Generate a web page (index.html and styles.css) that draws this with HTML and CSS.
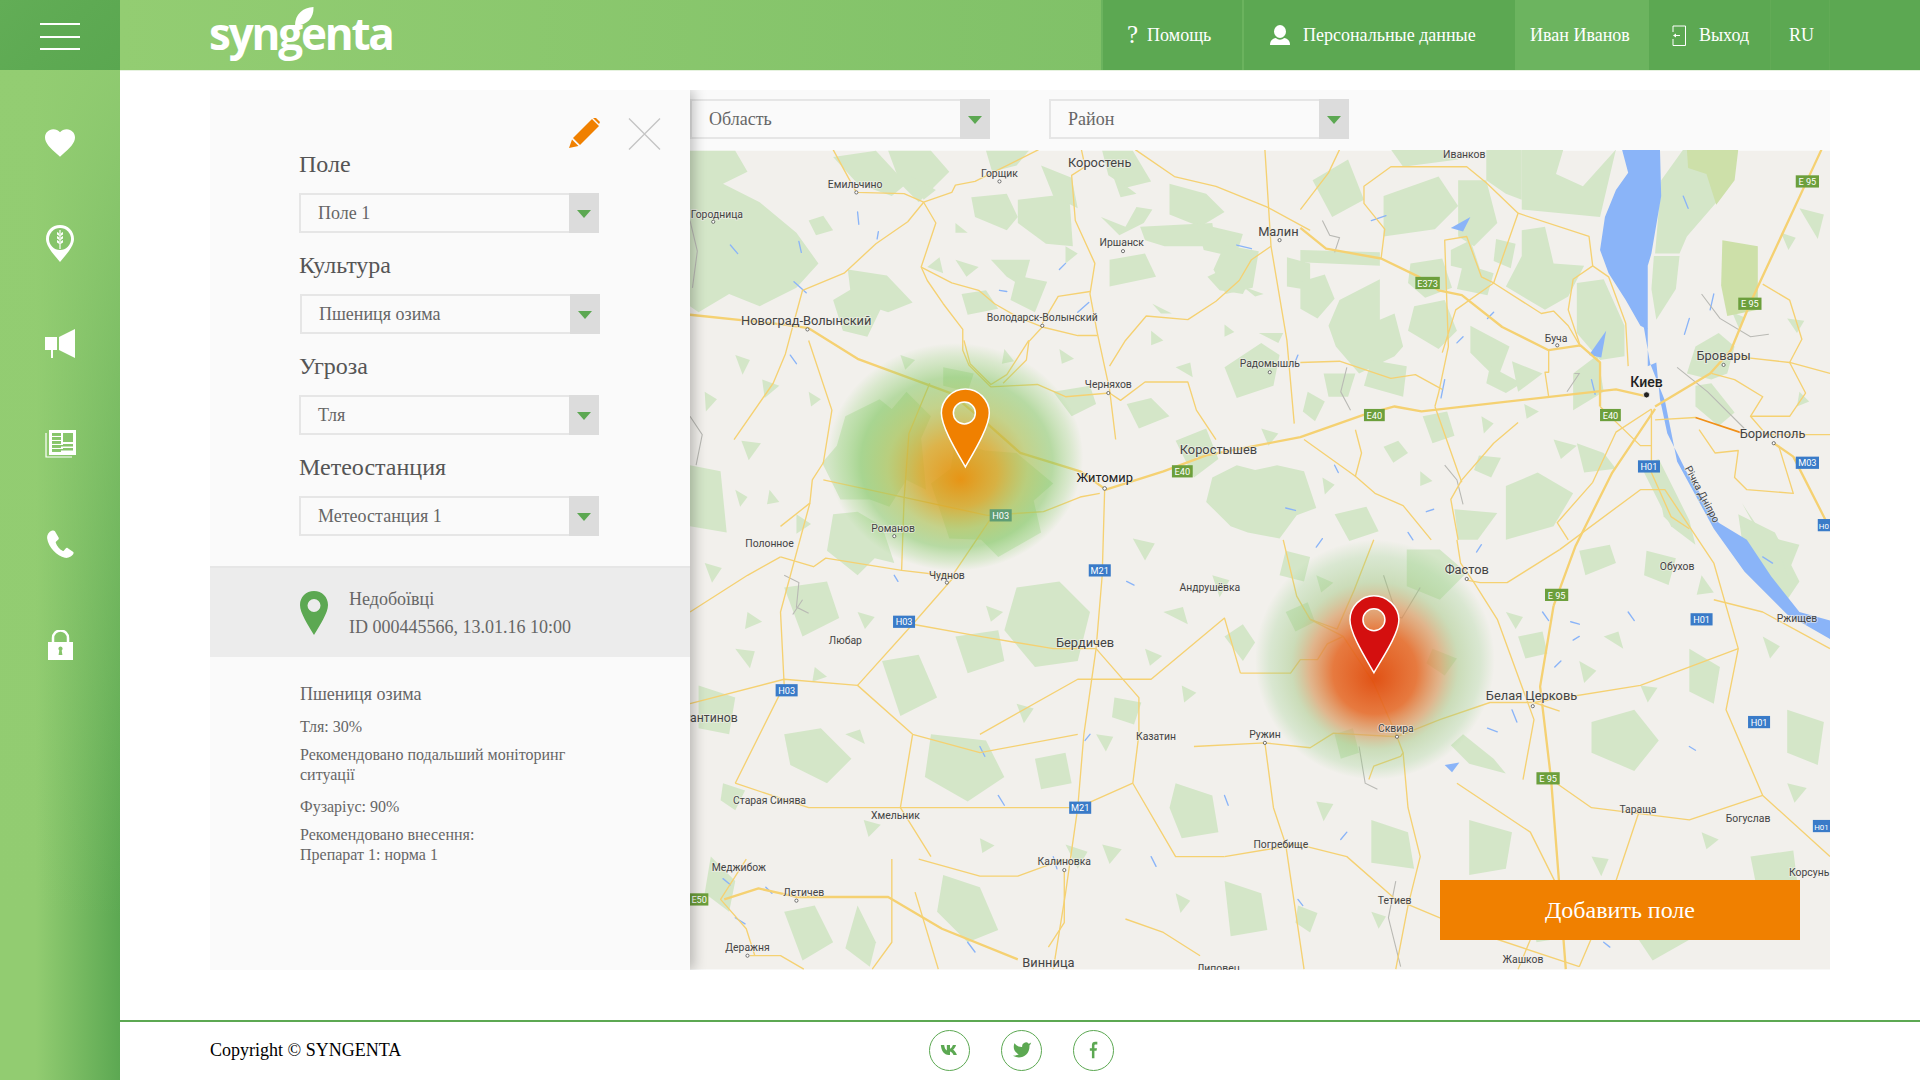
FILE: index.html
```html
<!DOCTYPE html>
<html lang="ru">
<head>
    <meta charset="UTF-8">
    <meta name="viewport" content="width=device-width, initial-scale=1.0">
    <title>Syngenta</title>
    <link rel="stylesheet" href="styles.css">
</head>
<body>
<div class="app">
    <aside class="sidebar">
        <div class="burger"><span></span><span></span><span></span></div>
        <nav class="side-nav">
            <a class="side-item"><svg width="30" height="28" viewBox="2 3 20 18.4"><path fill="#fff" d="M12 21.35l-1.45-1.32C5.4 15.36 2 12.28 2 8.5 2 5.42 4.42 3 7.5 3c1.74 0 3.41.81 4.5 2.09C13.09 3.81 14.76 3 16.5 3 19.58 3 22 5.42 22 8.5c0 3.78-3.4 6.86-8.55 11.54L12 21.35z"/></svg></a>
            <a class="side-item"><svg width="28" height="37" viewBox="0 0 28 37"><path fill="#fff" d="M14 0C6 0 0 6 0 14c0 7 8 16 14 23 6-7 14-16 14-23C28 6 22 0 14 0z"/><circle cx="14" cy="14" r="11" fill="#86c46a"/><path fill="#fff" d="M13.4 5h1.2v19h-1.2zM12.8 8l.6 3-2.4-1.6V7zM15.200 8l-.6 3 2.400-1.600V7zM12.800 12l.6 3-2.400-1.600v-2.400zM15.200 12l-.6 3 2.400-1.600v-2.400zM12.800 16l.6 3-2.400-1.600V15zM15.200 16l-.6 3 2.400-1.600V15z"/></svg></a>
            <a class="side-item"><svg width="30" height="29" viewBox="0 0 30 29"><path fill="#fff" d="M0 8h12v13H8v8H6v-8H0zM14 8l16-8v29l-16-8z"/></svg></a>
            <a class="side-item"><svg width="31" height="28" viewBox="0 0 31 28"><path fill="none" stroke="#fff" stroke-width="1.200" d="M1 3v24h26"/><path fill="#fff" d="M4 0h27v25H4zM7 3v3h9V3zm11 0v9h10V3zM7 8v2h9V8zm0 4v2h9v-2zm11 2v2h10v-2zM7 16v2h9v-2zm11 2v2h10v-2zM7 20v2h9v-2z"/><path fill="#86c46a" d="M7 3h9v2H7zM7 7h9v1.500H7zM7 11h9v1.500H7zM7 15h21v1.500H7zM7 19h21v1.500H7z"/></svg></a>
            <a class="side-item"><svg width="29" height="29" viewBox="0 0 24 24"><path fill="#fff" d="M4.600.7C2.600 1.600.6 3.900 1 7.200c.9 6.800 8.200 14.400 14.600 15.800 2.700.6 6.500-1.300 7.200-3.700.2-.6-.1-1-.5-1.300l-4.200-2.900c-.7-.5-1.300-.4-1.800.2l-1.600 1.800c-.3.3-.6.3-1 .1-2.400-1.300-4.700-4-5.600-6.700-.1-.4 0-.7.3-.9L10 8.100c.7-.5.7-1.100.4-1.800L7.400 1.100C6.800.2 5.800.1 4.600.7z"/></svg></a>
            <a class="side-item"><svg width="25" height="30" viewBox="0 0 25 30"><path fill="none" stroke="#fff" stroke-width="2.500" d="M5 13V8a7.500 7.500 0 0 1 15 0v5"/><path fill="#fff" d="M0 12h25v18H0z"/><path fill="#86c46a" d="M12.500 16.500a2.200 2.200 0 0 1 1.200 4l.7 4.500h-3.800l.7-4.500a2.200 2.200 0 0 1 1.200-4z"/></svg></a>
        </nav>
    </aside>
    <div class="content">
        <header class="topbar">
            <div class="logo">
                <svg class="logo-leaf" width="19" height="19" viewBox="0 0 19 19"><path fill="#fff" d="M0 18.500C0 7 8 .5 18.500 0 19 11 12 18.500 0 18.500z"/></svg>
                <span>syngenta</span>
            </div>
            <nav class="top-nav">
                <a class="top-item item-help"><span class="help-mark">?</span>Помощь</a>
                <a class="top-item item-person"><svg width="20" height="20" viewBox="0 0 20 20"><ellipse cx="10" cy="6.500" rx="6" ry="6.500" fill="#fff"/><path fill="#fff" d="M0 20c0-4 2-6.500 6-7 1 1.200 2.500 1.700 4 1.700s3-.5 4-1.700c4 .5 6 3 6 7z"/></svg>Персональные данные</a>
                <a class="top-item item-user">Иван Иванов</a>
                <a class="top-item item-exit"><svg width="14" height="21" viewBox="0 0 14 21"><path fill="none" stroke="#fff" d="M1 7V1h12.500v19.500H1V14"/><path fill="#fff" d="M1 10.500l3-2v1.500h4v1H4V12.500z"/></svg>Выход</a>
                <a class="top-item item-lang">RU</a>
            </nav>
        </header>

        <main class="board">
            <section class="panel">
                <div class="panel-tools">
                    <svg width="31" height="30" viewBox="0 0 31 30"><path fill="#f08000" d="M24 0l2-1 5 5-1 2zM23 1l7 7L11 27l-7-7zM3 21.500L9.500 28 0 30z"/></svg>
                    <svg width="33" height="32" viewBox="0 0 33 32"><path fill="none" stroke="#c4c4c4" stroke-width="1.300" d="M1 .5l31 31M32 .5l-31 31"/></svg>
                </div>
                <div class="fields">
                    <div class="field">
                        <label>Поле</label>
                        <div class="select"><span>Поле 1</span><i></i></div>
                    </div>
                    <div class="field">
                        <label>Культура</label>
                        <div class="select select-shift"><span>Пшениця озима</span><i></i></div>
                    </div>
                    <div class="field">
                        <label>Угроза</label>
                        <div class="select"><span>Тля</span><i></i></div>
                    </div>
                    <div class="field">
                        <label>Метеостанция</label>
                        <div class="select"><span>Метеостанция 1</span><i></i></div>
                    </div>
                </div>
                <div class="station">
                    <svg width="28" height="44" viewBox="0 0 28 44"><path fill="#5ca852" fill-rule="evenodd" d="M14 0C6 0 0 6 0 14c0 8 8 20 14 30 6-10 14-22 14-30C28 6 22 0 14 0zm0 8a6.500 6.500 0 1 1 0 13 6.500 6.500 0 0 1 0-13z"/></svg>
                    <div class="station-text">
                        <div>Недобоївці</div>
                        <div>ID 000445566, 13.01.16 10:00</div>
                    </div>
                </div>
                <div class="details">
                    <h3>Пшениця озима</h3>
                    <p class="d-pest">Тля: 30%</p>
                    <p class="d-rec">Рекомендовано подальший моніторинг ситуації</p>
                    <p class="d-pest2">Фузаріус: 90%</p>
                    <p class="d-rec2">Рекомендовано внесення:<br>Препарат 1: норма 1</p>
                </div>
            </section>

            <section class="map-side">
                <div class="map-filters">
                    <div class="select"><span>Область</span><i></i></div>
                    <div class="select"><span>Район</span><i></i></div>
                </div>
                <div class="map">
                    <svg class="map-svg" width="1140" height="820" viewBox="563 123 932 669">
                        <defs>
                            <radialGradient id="heat-orange" fx=".52" fy=".6">
                                <stop offset="0" stop-color="#e8900c" stop-opacity=".95"/>
                                <stop offset=".3" stop-color="#d8a422" stop-opacity=".8"/>
                                <stop offset=".55" stop-color="#a8c050" stop-opacity=".62"/>
                                <stop offset=".75" stop-color="#7cc45a" stop-opacity=".5"/>
                                <stop offset=".9" stop-color="#8fd070" stop-opacity=".25"/>
                                <stop offset="1" stop-color="#8fd070" stop-opacity="0"/>
                            </radialGradient>
                            <radialGradient id="heat-red" fx=".5" fy=".58">
                                <stop offset="0" stop-color="#e04a0a" stop-opacity=".95"/>
                                <stop offset=".35" stop-color="#e56a28" stop-opacity=".88"/>
                                <stop offset=".55" stop-color="#d89a60" stop-opacity=".68"/>
                                <stop offset=".7" stop-color="#9cc47a" stop-opacity=".45"/>
                                <stop offset=".88" stop-color="#8fcc80" stop-opacity=".25"/>
                                <stop offset="1" stop-color="#8fcc80" stop-opacity="0"/>
                            </radialGradient>
                        </defs>
                        <rect x="563" y="123" width="932" height="669" fill="#f2f0ec"/>

                        <g class="forest">
                            <path d="M563 123h37l10 17-20 10 30 15 30 25 18 25-18 20-30 15-25-10-25 15-7-5z"/>
                            <path d="M680 128l35-5 25 27-12 10-28-10z"/>
                            <path d="M725 123h35l15 17-25 25-15-15z"/>
                            <path d="M793 161l29-3 9 19-9 11-26-11z"/>
                            <path d="M831 163l42-5 3 43-22-2-23-17z"/>
                            <path d="M850 135l25 10 5 25-20-10z"/>
                            <path d="M805 123h35l-10 12-20 5z"/>
                            <path d="M900 123h25l15 25-20 5-15-10z"/>
                            <path d="M955 150l30 8 15 15-20 12-25-10z"/>
                            <path d="M931 185l59-3 3 19-42 0-16-5z"/>
                            <path d="M977 182l38 9-6 19-26-6z"/>
                            <path d="M986 226l23-11 13 11-7 14-19-3z"/>
                            <path d="M906 212l29-5 9 19-38 8z"/>
                            <path d="M899 177l20 8 9-16 13 2-7 11-20 10z"/>
                            <path d="M909 144l19 14-13 3z"/>
                            <path d="M780 212l19 6-10 8z"/>
                            <path d="M809 212h32l-6 22-13-8z"/>
                            <path d="M767 210l3 13-13-5z"/>
                            <path d="M744 144l20 11-10 8z"/>
                            <path d="M780 182l10 8h-10z"/>
                            <path d="M870 201l10 6-10 8z"/>
                            <path d="M941 248l16 8-9 0z"/>
                            <path d="M1028 272h20l-4 8z"/>
                            <path d="M1015 234l17 6-7 2z"/>
                            <path d="M1051 210l19 5v22l-19-3z"/>
                            <path d="M1000 200l28 5-5 30-22 5-10-20z"/>
                            <path d="M660 180l12-4 8 12-14 4z"/>
                            <path d="M680 245l25-15 15 20-12 25-20-5z"/>
                            <path d="M692 220l32 5 21 22-20 8-30-10z"/>
                            <path d="M785 240l20-3 10 15-25 5z"/>
                            <path d="M830 225l25 5-10 25-20-10z"/>
                            <path d="M770 300l25 5-5 15-20-5z"/>
                            <path d="M690 340l28-14 10 8 12-14 20 20-8 18 4 42-16-8-14 22-16-6-24 0-15-30 12-14z"/>
                            <path d="M680 420l20-2 20 12 10 30-16-4-14 14-25-20z"/>
                            <path d="M780 360l24 8 26 2 30 25-16 14 6 26-35 20-14-14-26-1-15-45 16-12z"/>
                            <path d="M563 380l25 5 5 50-30-5z"/>
                            <path d="M860 320l30-5 5 15-20 10z"/>
                            <path d="M920 330l20-5 15 15-25 10z"/>
                            <path d="M960 360l25-10 10 25-20 15z"/>
                            <path d="M990 390l20-10 15 4 18-4 22 5 10 30-16 6-14 19-26-5-14-5-20-20z"/>
                            <path d="M1000 300l30-20 15 10-5 25-30 10z"/>
                            <path d="M1094 245l33-17v33l12-5 7 27-7 8-29 14-19-22-6-17z"/>
                            <path d="M1072 147l29-17 13 33-26 14z"/>
                            <path d="M1130 160l45-16 16 24-19 19-42 6z"/>
                            <path d="M1136 122h42l13 8-45 6z"/>
                            <path d="M1062 204l65 2v11l-65-3z"/>
                            <path d="M1185 204l16-8 9 27-25-6z"/>
                            <path d="M1191 147h23l9 35-19 19-13-8z"/>
                            <path d="M1214 122h29v41l-13-5-16-11z"/>
                            <path d="M1243 122h34l-6 20 22 10 27-30-13 55-64-6z"/>
                            <path d="M1243 188l19-3 7 30 25 2-13 25-19 11-32-19 13-25z"/>
                            <path d="M1288 231l22-3 17 38v25l-20 3-19-22z"/>
                            <path d="M1351 209h21l-3 27-16 25-4-25z"/>
                            <path d="M1375 122h25l4 41-26 30-6 14h-20l5-60z"/>
                            <path d="M1385 283l19-11 13 11-6 22-13 5-20-5z"/>
                            <path d="M1385 315l13-2 19 24-13 11-19-16z"/>
                            <path d="M1201 266l32 17-10 27-22-22z"/>
                            <path d="M1120 294l29 5-3 25-32-9z"/>
                            <path d="M1081 305h26l-6 19h-16z"/>
                            <path d="M1217 299l26 14-13 8-16-8z"/>
                            <path d="M1230 397l26-11 29 17-16 27-39 11z"/>
                            <path d="M1188 416l35 3-16 22h-16z"/>
                            <path d="M1288 362l22 8 10 13-26 3z"/>
                            <path d="M1352 386l20 33v16l-13-13z"/>
                            <path d="M1269 359l19 5-13 11z"/>
                            <path d="M1423 411l18 27 13 3-20-10z"/>
                            <path d="M1155 250l25-5 10 25-15 15-25-15z"/>
                            <path d="M1195 215l25 8-5 18-25-5z"/>
                            <path d="M1285 305l20-15 5 30-25 15z"/>
                            <path d="M1235 295l25 10-20 15z"/>
                            <path d="M1130 365l12-5 8 10-12 8z"/>
                            <path d="M1340 380l15-5 25 50 5 20-20-15z"/>
                            <path d="M1420 420l30 15 20 40-10 15-35-35z"/>
                            <path d="M1149 449l27 0 22 19-22 22-27-11z"/>
                            <path d="M1290 450l25-5 5 15-25 10z"/>
                            <path d="M1170 530l20 8-10 14-15-10z"/>
                            <path d="M1195 600l25 20 10 12-30-8-15-15z"/>
                            <path d="M1050 450l20 5-5 20-20-5z"/>
                            <path d="M1000 520l15-10 10 15-10 15z"/>
                            <path d="M830 480l35-5 25 25-10 40-35 5-25-30z"/>
                            <path d="M780 520l35-5 5 25-30 10z"/>
                            <path d="M720 540l30-5 15 35-30 15z"/>
                            <path d="M640 480l35-5 10 30-30 15z"/>
                            <path d="M570 560l30 10-5 30-25-5z"/>
                            <path d="M640 600l30-5 25 25-20 20-30-15z"/>
                            <path d="M760 600l45 5 15 30-30 20-35-20z"/>
                            <path d="M845 620l25-5 5 25-25 5z"/>
                            <path d="M960 640l30 10 5 30-30 5-10-25z"/>
                            <path d="M1000 720l30 10 5 30-30 5z"/>
                            <path d="M1120 670l30 10 5 30-35-5z"/>
                            <path d="M1200 670l35 10-5 30-30 5z"/>
                            <path d="M1300 590l35-10 20 25-20 25-35-15z"/>
                            <path d="M1380 530l25 15-5 30-20-10z"/>
                            <path d="M1340 720l35 5 10 40-35 20-20-30z"/>
                            <path d="M1430 700l35-5 5 40-30 15z"/>
                            <path d="M1250 740l30-5 5 30-30 5z"/>
                            <path d="M580 700l20 20-5 25-20-15z"/>
                            <path d="M640 745l25-5 15 30-25 15z"/>
                            <path d="M700 740l15 30-5 20-20-15z"/>
                            <path d="M770 715l30 10 15 35-25 10-25-25z"/>
                            <path d="M1090 600l15-5 5 20-15 5z"/>
                            <path d="M1460 580l30 10-5 35-25-10z"/>
                            <path d="M1470 170l20 5-5 20z"/>
                            <path d="M1450 440l20 5-10 25z"/>
                            <path d="M600 290l12 4-6 12z"/><path d="M622 310l14 5-12 10z"/><path d="M575 320l10 6-9 10z"/>
                            <path d="M605 360l16 2-10 14z"/><path d="M575 460l14 4-8 12z"/><path d="M610 500l12 8-14 6z"/>
                            <path d="M600 530l16 2-4 14z"/><path d="M665 545l10 8-12 4z"/><path d="M700 500l14 4-8 10z"/>
                            <path d="M805 495l14 5-10 8z"/><path d="M925 440l18 4-8 14z"/><path d="M950 500l16-4 4 14z"/>
                            <path d="M935 530l14 6-10 8z"/><path d="M990 470l14 4-8 14z"/><path d="M1075 470l14 6-10 8z"/>
                            <path d="M965 560l12 6-10 8z"/><path d="M895 600l14 2-6 12z"/><path d="M830 575l14 4-8 12z"/>
                            <path d="M690 600l12-4 4 12z"/><path d="M705 670l14 4-10 10z"/><path d="M800 685l12 6-10 6z"/>
                            <path d="M900 690l16 4-10 12z"/><path d="M960 730l12 6-8 10z"/><path d="M1075 655l14 2-8 14z"/>
                            <path d="M1180 745l14 6-10 8z"/><path d="M1120 745l12 4-6 10z"/><path d="M1300 700l14 2-6 14z"/>
                            <path d="M1390 680l14 6-10 8z"/><path d="M1460 640l16 4-10 12z"/><path d="M1440 520l14 8-8 10z"/>
                            <path d="M1340 560l14 2-8 12z"/><path d="M1310 520l12-4 4 14z"/><path d="M1230 500l14 4-6 10z"/>
                            <path d="M1415 255l10 4-4 10z"/><path d="M1460 260l14 2-6 10z"/><path d="M1455 190l12 4-6 10z"/>
                            <path d="M1470 320l8 8-10 4z"/><path d="M1210 340l10 6-8 8z"/><path d="M1245 330l12 6-10 6z"/>
                            <path d="M1160 385l10 8-10 4z"/><path d="M1080 390l10 6-8 8z"/><path d="M1030 350l14 4-8 10z"/>
                            <path d="M940 270l10 8-10 4z"/><path d="M960 300l12-4 2 12z"/><path d="M1000 265l8 6-8 4z"/>
                            <path d="M865 285l12 8-10 4z"/><path d="M820 285l8 10-10 2z"/><path d="M735 290l12 4-8 8z"/>
                            <path d="M660 320l10 6-8 6z"/><path d="M600 400l10 6-6 8z"/><path d="M628 400l8 10-10 2z"/>
                            <path d="M1062 230l20-6 8 20-14 16-14-8z"/><path d="M1152 215l26-4 8 24-22 8-14-12z"/>
                            <path d="M1222 195l16 4-4 20-14-6z"/><path d="M1068 320l14 8-8 16-10-8z"/><path d="M1162 340l20-4 6 20-18 6z"/>
                            <path d="M1208 372l18 2-8 16-14-6z"/><path d="M1090 420l26-6 10 20-24 8z"/><path d="M1050 500l18-8 6 16-16 8z"/>
                            <path d="M1240 520l20-4 4 18-18 4z"/><path d="M1345 450l24 6-6 22-20-8z"/><path d="M1390 470l10 14-14 2z"/>
                            <path d="M1290 540l14 8-10 10z"/><path d="M910 570l22 4-6 18-18-6z"/><path d="M870 690l18 6-8 14z"/>
                            <path d="M650 420l12 8-12 8z"/><path d="M590 640l18 6-8 16-12-8z"/><path d="M1060 740l16 6-6 16-12-8z"/>
                        </g>
                        <g class="forest-light">
                            <path d="M1378 122h42l-3 25-15 20-8-25-15-5z"/>
                            <path d="M1407 196l29 5v52l-25 5-5-25z"/>
                        </g>

                        <g class="water">
                            <path d="M1325 122h31l1 38-8 47-3 10v52l-6-3-12-21-14-22-7-19 4-27 9-22 10-14z"/>
                            <path d="M1346 269v30l7-3 3 30 6 28 16 32 26 41 23 14 20 30 23 29 25 7v15l-35-20-35-35-25-35-30-55-10-50-12-30-7-40z"/>
                            <path d="M1312 270l-14 20 10 2z"/>
                            <path d="M1185 186l16-9-6 12z"/>
                            <path d="M1180 625l12-2-6 8z"/>
                        </g>
                        <g class="brook">
                            <path d="M596 200l6 7M700 173l1 10M652 197l2 9M716 195l1-6M648 230l10 9M816 237l6 1M870 215l-5 5M880 255l9-8M645 290l5 7M1010 200l12 3M1120 180l12-4M1060 290l-4 10M1180 310l-3 15M1195 275l-5 5M1220 255l-5 5M1300 310l3 12M1375 160l4 10M1400 240l-3 13M1380 260l-4 13M1440 455l8 5M1090 380l3 6M1150 435l4 6M1210 445l-4 6M1165 418l6-2M1260 500l5 7M1283 508l7 2M1215 595l8 3M1275 540l-5 5M1290 520l-5 3M1330 500l5 7M1235 580l4 10M1080 440l-5 7M1050 415l8 2M920 475l6 3M600 750l8 5M590 718l6 5M625 725l5 5M815 650l5 8M860 700l3 10M790 770l6 8M940 700l4 8M1000 650l3 8M1100 680l-5 6M800 610l4 8M730 470l3 5M1060 735l4 5M1380 610l5 3M1310 770l5 4M890 600l-4 5"/>
                        </g>
                        <g class="border-line">
                            <path d="M563 180l6 25-4 30M563 340l10 15-5 25M640 470l12 6-2 20 10 5M655 490l-8 12M1080 180l6 12 8 2-4 12M1100 300l-5 20 8 15M1180 380l10 12 5 20M1280 320l10-15h-4M1390 240l15 20 25 15 15-2M1370 300l25 20 30 30M1130 470l10 30-5 30M1160 480l-15 25-15-5M1110 610l5 30 10 5M1140 720l-6 30 10 40"/>
                        </g>
                        <g class="road">
                            <path d="M680 122l19 35 39 1 16 7 23-8 3-6 16-3 52-26"/>
                            <path d="M754 165l10 17-12 36 5 11 13 19 16 21v17l5 12 18 18"/>
                            <path d="M754 165l-13 16-26 18-26 24-34 14-6 22-8 30-10 24-32 46"/>
                            <path d="M752 218l25 13 22 6 13 11 19 11 20 8 29 7 16 0"/>
                            <path d="M851 267l-11 12-2 15-19 19"/>
                            <path d="M809 316l38-2 23 10 36-3 9 6 20-15h35l7 23 16 24"/>
                            <path d="M883 122l3 14-11 7 3 37 16 35-4 25 6 32 10 46 5 41"/>
                            <path d="M1033 122l3 47 2 32 13 77 6 68"/>
                            <path d="M1038 201l-16 11-10 17-19 17-23 15-34-3-17 20-13 21"/>
                            <path d="M890 238l-26 4-13 22"/>
                            <path d="M927 122l32 22 34 8 42 17 35 19"/>
                            <path d="M672 392l134 29 46-3 30-12 16-3"/>
                            <path d="M759 313l-17 41-4 54-2 58"/>
                            <path d="M808 425l-29 43"/>
                            <path d="M637 455l27 8 10-7 62 10 43 5"/>
                            <path d="M660 278l19 57-7 43-9 14-2 19-24 19"/>
                            <path d="M787 278l5 19 17 17 13-8 18-28"/>
                            <path d="M1013 550h41l8-11h14l8-13 13-6-27-14-11-19-11-46"/>
                            <path d="M1070 506l22 8 14-32 16-41"/>
                            <path d="M1097 520l25 38 19 44 5 13-2 3-22 8-4 11"/>
                            <path d="M1033 607l37 4 19-12 52 3 35-14 41-14h36l21 7"/>
                            <path d="M1198 474l11 2h22l43-27"/>
                            <path d="M1190 441l3 19 11 16 19 30 30 82-9 49"/>
                            <path d="M902 400l-2 70-5 60-10 70-5 60-10 70-10 62"/>
                            <path d="M750 702l50 14h31l38-14"/>
                            <path d="M728 702v68l-16 22"/>
                            <path d="M747 729l19 63"/>
                            <path d="M869 710v44l-13 20"/>
                            <path d="M919 751l31 11 30 19"/>
                            <path d="M609 702l-21 33 21 24 7 22"/>
                            <path d="M612 781h25l19 11"/>
                            <path d="M1146 615l4 45 10 40-10 40-10 52"/>
                            <path d="M1000 700l60-10 40 10 40 35 60 25 90 30"/>
                            <path d="M975 610l58-3 7 53 10 30 15 102"/>
                            <path d="M800 600l80-45h60l60-50 13 45"/>
                            <path d="M930 600l-5 40 35 60h40"/>
                            <path d="M745 510l55 10 60 10h35l35 40v30"/>
                            <path d="M563 575l77-20 60 5 45 40 55 15 80-15"/>
                            <path d="M700 560l45-50 35-40"/>
                            <path d="M745 600l-10 60 25 40"/>
                            <path d="M600 640l60 20h220l45-20"/>
                            <path d="M563 500l47-30 27-15"/>
                            <path d="M600 640l40-80-3-60 24-89"/>
                            <path d="M1400 490l40 10 55 30"/>
                            <path d="M1274 449l66-49h20l40 60 20 70-10 50 30 70 55 50"/>
                            <path d="M1253 574l87-14 80-30"/>
                            <path d="M1267 637l33 23 80 10 60-20"/>
                            <path d="M1340 660l-20 60-30 70"/>
                            <path d="M1190 640l60 40 20 40-30 72"/>
                            <path d="M1349 334l-29 19-19 41-29 33 9 14"/>
                            <path d="M1349 334v52l16 36 15 10"/>
                            <path d="M1307 332l33 32h9"/>
                            <path d="M1240 345l-20 17-26 30-9 16 6 33"/>
                            <path d="M1172 332l19 54 3 8"/>
                            <path d="M1172 332l3-11 8-38-3-87 18-3 12 33 10 5-31 22-11 35"/>
                            <path d="M1220 231l20-57-26-25-16-13h-62l-22 16v14l17 21-3 24"/>
                            <path d="M1240 174l58 19 3 24 13 9 14 38 2 35"/>
                            <path d="M1220 231l39 25 10-2 12 12 10 17"/>
                            <path d="M1301 217l-16 11-4 25 10 30"/>
                            <path d="M1265 286v18l-3 0 3 20"/>
                            <path d="M1062 296l32-1 42 14 20-3 22 12"/>
                            <path d="M1062 171l23-30 9-19"/>
                            <path d="M1107 351l5 19-5 19 16 14 23 10 23 28"/>
                            <path d="M1065 359l42 30"/>
                            <path d="M1398 305l19 5 23 14-10 16 13 15h52"/>
                            <path d="M1417 291l45 5 33 9"/>
                            <path d="M1440 232l22 13 10 32-10 19 13 25-13 19h-32"/>
                            <path d="M1352 343l33-2"/>
                            <path d="M1388 351l13 19 19-2-3 22 10 10 38 3-12-39"/>
                        </g>
                        <g class="road-major">
                            <path d="M563 257l77 8 20 3 40 25 76 28 30 25 27 24 49 15 21 15"/>
                            <path d="M903 400l47-15 35-13 77-15 51-18 26-7 22 4 159-18 26 6"/>
                            <path d="M1062 186l21 17 45 8 31 15 16 11 19 4 33 26 38 19 26-4 16 14v36"/>
                            <path d="M1488 122l-13 28-45 97-16 39-17 19-45 27"/>
                            <path d="M1269 495l-11 66 9 76 12 155"/>
                            <path d="M1352 334l-35 52-30 60-18 49"/>
                            <path d="M591 735l28-9 31 7h75l44 26 62 25"/>
                            <path d="M1449 362l16 11 30 59"/>
                        </g>
                        <path class="road-orange" d="M1385 341l39 13"/>

                        <g transform="scale(.8167)">
                            <ellipse cx="955" cy="457" rx="128" ry="114" fill="url(#heat-orange)"/>
                            <circle cx="1375" cy="660" r="120" fill="url(#heat-red)"/>
                        </g>

                        <g class="labels">
                            <text x="898" y="136" class="l-md">Коростень</text>
                            <text x="698" y="153" class="l-xs">Емильчино</text>
                            <text x="816" y="144" class="l-xs">Горщик</text>
                            <text x="585" y="178" class="l-xs">Городница</text>
                            <text x="1044" y="193" class="l-md">Малин</text>
                            <text x="916" y="201" class="l-xs">Иршанск</text>
                            <text x="658" y="265" class="l-md">Новоград-Волынский</text>
                            <text x="851" y="262" class="l-xs">Володарск-Волынский</text>
                            <text x="1037" y="300" class="l-xs">Радомышль</text>
                            <text x="1271" y="279" class="l-xs">Буча</text>
                            <text x="1408" y="294" class="l-md">Бровары</text>
                            <text x="1345" y="316" class="l-bold">Киев</text>
                            <text x="1448" y="358" class="l-md">Борисполь</text>
                            <text x="905" y="317" class="l-xs">Черняхов</text>
                            <text x="995" y="371" class="l-md">Коростышев</text>
                            <text x="902" y="394" class="l-dark">Житомир</text>
                            <text x="729" y="435" class="l-xs">Романов</text>
                            <text x="628" y="447" class="l-xs">Полонное</text>
                            <text x="773" y="473" class="l-xs">Чуднов</text>
                            <text x="1198" y="469" class="l-md">Фастов</text>
                            <text x="1370" y="466" class="l-xs">Обухов</text>
                            <text x="988" y="483" class="l-xs">Андрушёвка</text>
                            <text x="1468" y="508" class="l-xs">Ржищев</text>
                            <text x="690" y="526" class="l-xs">Любар</text>
                            <text x="886" y="529" class="l-md">Бердичев</text>
                            <text x="1251" y="572" class="l-md">Белая Церковь</text>
                            <text x="602" y="590" class="l-end">Константинов</text>
                            <text x="944" y="605" class="l-xs">Казатин</text>
                            <text x="1033" y="603" class="l-xs">Ружин</text>
                            <text x="1140" y="598" class="l-xs">Сквира</text>
                            <text x="628" y="657" class="l-xs">Старая Синява</text>
                            <text x="731" y="669" class="l-xs">Хмельник</text>
                            <text x="1338" y="664" class="l-xs">Тараща</text>
                            <text x="1428" y="672" class="l-xs">Богуслав</text>
                            <text x="1046" y="693" class="l-xs">Погребище</text>
                            <text x="869" y="707" class="l-xs">Калиновка</text>
                            <text x="603" y="712" class="l-xs">Меджибож</text>
                            <text x="1478" y="716" class="l-xs">Корсунь</text>
                            <text x="656" y="732" class="l-xs">Летичев</text>
                            <text x="1139" y="739" class="l-xs">Тетиев</text>
                            <text x="610" y="777" class="l-xs">Деражня</text>
                            <text x="856" y="790" class="l-md">Винница</text>
                            <text x="1244" y="787" class="l-xs">Жашков</text>
                            <text x="995" y="794" class="l-xs">Липовец</text>
                            <text x="1196" y="129" class="l-xs">Иванков</text>
                            <text transform="translate(1388 405) rotate(62)" class="l-xs">Річка Дніпро</text>
                        </g>
                        <g class="dots">
                            <circle cx="699" cy="157" r="1.300"/><circle cx="816" cy="148" r="1.300"/><circle cx="582" cy="181" r="1.300"/><circle cx="1045" cy="196" r="1.300"/><circle cx="917" cy="205" r="1.300"/><circle cx="659" cy="269" r="1.300"/><circle cx="851" cy="266" r="1.300"/><circle cx="1037" cy="304" r="1.300"/><circle cx="1272" cy="282" r="1.300"/><circle cx="1408" cy="298" r="1.300"/><circle cx="1449" cy="362" r="1.300"/><circle cx="905" cy="321" r="1.300"/><circle cx="902" cy="399" r="1.500"/><circle cx="730" cy="438" r="1.300"/><circle cx="773" cy="476" r="1.300"/><circle cx="1198" cy="473" r="1.300"/><circle cx="1252" cy="577" r="1.300"/><circle cx="1141" cy="602" r="1.300"/><circle cx="1033" cy="607" r="1.300"/><circle cx="869" cy="711" r="1.300"/><circle cx="650" cy="736" r="1.300"/><circle cx="610" cy="781" r="1.300"/>
                        </g>
                        <circle cx="1345" cy="322.500" r="2.500" fill="#222" stroke="#fff" stroke-width=".6"/>

                        <g class="shields">
                            <g class="sh-green">
                                <rect x="1467" y="143" width="19" height="10"/><text x="1476.500" y="151">E 95</text>
                                <rect x="1156" y="226" width="20" height="10"/><text x="1166" y="234">E373</text>
                                <rect x="1420" y="243" width="19" height="10"/><text x="1429.500" y="251">E 95</text>
                                <rect x="1114" y="334" width="17" height="10"/><text x="1122.500" y="342">E40</text>
                                <rect x="1307" y="334" width="17" height="10"/><text x="1315.500" y="342">E40</text>
                                <rect x="957" y="380" width="17" height="10"/><text x="965.500" y="388">E40</text>
                                <rect x="1262" y="481" width="19" height="10"/><text x="1271.500" y="489">E 95</text>
                                <rect x="1255" y="631" width="19" height="10"/><text x="1264.500" y="639">E 95</text>
                                <rect x="563" y="730" width="15" height="10"/><text x="570.500" y="738">E50</text>
                                <rect x="808" y="416" width="18" height="10" class="sh-teal"/><text x="817" y="424">H03</text>
                            </g>
                            <g class="sh-blue">
                                <rect x="729" y="503" width="18" height="10"/><text x="738" y="511">H03</text>
                                <rect x="633" y="559" width="18" height="10"/><text x="642" y="567">H03</text>
                                <rect x="889" y="461" width="18" height="10"/><text x="898" y="469">M21</text>
                                <rect x="873" y="655" width="18" height="10"/><text x="882" y="663">M21</text>
                                <rect x="1338" y="376" width="18" height="10"/><text x="1347" y="384">H01</text>
                                <rect x="1381" y="501" width="18" height="10"/><text x="1390" y="509">H01</text>
                                <rect x="1428" y="585" width="18" height="10"/><text x="1437" y="593">H01</text>
                                <rect x="1467" y="373" width="19" height="10"/><text x="1476.500" y="381">M03</text>
                                <rect x="1485" y="424" width="10" height="10"/><text x="1490" y="432" class="sh-small">H0</text>
                                <rect x="1481" y="670" width="14" height="10"/><text x="1488" y="678" class="sh-small">H01</text>
                            </g>
                        </g>

                        <g transform="scale(.8167)">
                            <path class="pin pin-orange" fill-rule="evenodd" d="M965 389c-13 0-24 11-24 24 0 14 16 40 24 54 8-14 24-40 24-54 0-13-11-24-24-24zm-1 13a11 11 0 1 1 0 22 11 11 0 0 1 0-22z"/>
                            <path class="pin pin-red" fill-rule="evenodd" d="M1374 596c-13 0-24 11-24 24 0 14 16 39 24 53 8-14 25-39 25-53 0-13-12-24-25-24zm0 13a11 11 0 1 1 0 22 11 11 0 0 1 0-22z"/>
                        </g>
                    </svg>
                    <a class="add-field">Добавить поле</a>
                </div>
            </section>
        </main>

        <footer class="footer">
            <div class="copyright">Copyright © SYNGENTA</div>
            <div class="socials">
                <a class="social"><svg width="20" height="20" viewBox="0 0 24 24"><path fill="#5ca852" d="M1 6h4c.4 3.500 1.800 6 3.200 6.500V6h3.800v4.500c1.200-.4 2.800-2.400 3.500-4.500h3.800c-.6 2.500-2.400 4.700-3.600 5.800 1.500 1 3.600 3.200 4.600 6.200h-4.100c-.8-2.200-2.400-3.700-4.200-4.200V18h-1.500C5 18 1.500 13 1 6z"/></svg></a>
                <a class="social"><svg width="20" height="20" viewBox="0 0 24 24"><path fill="#5ca852" d="M23 3a10.900 10.900 0 0 1-3 1.400 4.480 4.480 0 0 0-7.860 3v1A10.660 10.660 0 0 1 3 4s-4 9 5 13a11.640 11.640 0 0 1-7 2c9 5 20 0 20-11.500a4.500 4.500 0 0 0-.08-.83A7.720 7.720 0 0 0 23 3z"/></svg></a>
                <a class="social"><svg width="20" height="20" viewBox="0 0 24 24"><path fill="#5ca852" d="M16 2h-2.500a4 4 0 0 0-4 4v4H7v3h2.500v9h3v-9H15l.6-3h-3.100V6.500a1 1 0 0 1 1-1H16z"/></svg></a>
            </div>
        </footer>
    </div>
</div>
</body>
</html>
```

FILE: styles.css
```css
body {
    margin: 0;
    font-family: "Liberation Serif", "Times New Roman", serif;
    background-color: #fff;
    color: #666;
}
.app {
    display: flex;
    height: 1080px;
    overflow: hidden;
}

/* left column */
.sidebar {
    width: 120px;
    flex-shrink: 0;
    background: linear-gradient(to bottom, #93cd72 0, rgba(147, 205, 114, 0) 85%),
                linear-gradient(to right, #92cc71 30%, #5ca852 100%);
}
.burger {
    height: 70px;
    box-sizing: border-box;
    padding-top: 23px;
    background: linear-gradient(135deg, #62ad56, #5aa750);
}
.burger span {
    display: block;
    width: 40px;
    height: 2px;
    margin: 0 auto 10.500px;
    background-color: #fff;
}
.side-nav {
    padding-top: 23px;
}
.side-item {
    display: flex;
    justify-content: center;
    align-items: center;
    height: 100.400px;
}

/* top bar */
.content {
    flex: 1;
    display: flex;
    flex-direction: column;
    min-width: 0;
}
.topbar {
    display: flex;
    justify-content: space-between;
    height: 70px;
    background: linear-gradient(to right, #93cd72, #80c168 55%);
    border-bottom: 1px solid #e6f2df;
    box-sizing: content-box;
    margin-bottom: -1px;
}
.logo {
    position: relative;
    margin-left: 89px;
    color: #fff;
    font-family: "Open Sans", sans-serif;
    font-weight: 700;
    font-size: 44px;
    letter-spacing: -2.200px;
    line-height: 66px;
}
.logo-leaf {
    position: absolute;
    left: 86px;
    top: 7px;
}
.top-nav {
    display: flex;
    background-color: #5ca852;
    width: 819px;
    color: #fff;
    font-size: 18px;
}
.top-item {
    display: flex;
    align-items: center;
    box-sizing: border-box;
}
.item-help {
    width: 141px;
    padding-left: 24px;
    border-left: 2px solid #6bb35e;
}
.help-mark {
    font-size: 25px;
    margin-right: 9px;
}
.item-person {
    width: 273px;
    padding-left: 26px;
    border-left: 2px solid #6bb35e;
}
.item-person svg {
    margin-right: 13px;
}
.item-user {
    width: 134px;
    padding-left: 15px;
    background-color: #6cb45f;
}
.item-exit {
    width: 122px;
    padding-left: 23px;
    border-right: 1px solid #62ab56;
}
.item-exit svg {
    margin-right: 13px;
}
.item-lang {
    padding-left: 18px;
    width: 59px;
    border-right: 1px solid #62ab56;
}

/* main block */
.board {
    display: flex;
    height: 880px;
    margin: 20px 90px 50px;
    overflow: hidden;
    flex-shrink: 0;
}
.panel {
    position: relative;
    z-index: 2;
    width: 480px;
    flex-shrink: 0;
    background-color: #fafafa;
    box-shadow: 4px 0 12px rgba(0, 0, 0, 0.24);
}
.panel-tools {
    display: flex;
    justify-content: flex-end;
    gap: 28px;
    height: 31px;
    padding: 28px 29px 0 0;
}
.fields {
    padding-left: 89px;
}
.field {
    margin-bottom: 17px;
}
.field label {
    display: block;
    height: 30px;
    line-height: 30px;
    margin-bottom: 14px;
    font-size: 24px;
    color: #555;
}
.select {
    display: flex;
    justify-content: space-between;
    width: 300px;
    height: 40px;
    box-sizing: border-box;
    border: 2px solid #e6e6e6;
    border-right: none;
    background-color: #fafafa;
    font-size: 18px;
    line-height: 36px;
    color: #666;
}
.select span {
    padding-left: 17px;
}
.select i {
    position: relative;
    width: 30px;
    margin-top: -2px;
    margin-bottom: -2px;
    background-color: #dcdcdc;
}
.select i::after {
    content: "";
    position: absolute;
    left: 8px;
    top: 17px;
    border-left: 7px solid transparent;
    border-right: 7px solid transparent;
    border-top: 8px solid #5ca852;
}
.select-shift {
    margin-left: 1px;
}
.station {
    display: flex;
    align-items: center;
    gap: 21px;
    height: 91px;
    box-sizing: border-box;
    margin-top: 30px;
    padding-left: 90px;
    background-color: #ececec;
    border-top: 2px solid #e6e6e6;
    font-size: 18px;
    line-height: 28px;
    color: #666;
}
.details {
    padding: 24px 90px 0;
    font-size: 16px;
    line-height: 20px;
    color: #666;
}
.details h3 {
    margin: 0 0 9.500px;
    font-size: 18px;
    font-weight: normal;
    line-height: 26px;
}
.details p {
    margin: 0;
}
.details .d-pest {
    margin-bottom: 8px;
}
.details .d-rec {
    width: 290px;
    margin-bottom: 12px;
}
.details .d-pest2 {
    margin-bottom: 8px;
}

/* map side */
.map-side {
    flex: 1;
    display: flex;
    flex-direction: column;
    background-color: #fafafa;
    min-width: 0;
}
.map-filters {
    display: flex;
    gap: 59px;
    height: 60px;
    box-sizing: border-box;
    padding-top: 9px;
}
.map {
    position: relative;
    height: 820px;
    overflow: hidden;
}
.map-svg {
    display: block;
}
.forest {
    fill: #d4e6c8;
    filter: blur(.3px);
}
.forest-light {
    fill: #cde0a9;
}
.water {
    fill: #8ab4f8;
}
.brook {
    fill: none;
    stroke: #8ab4f8;
    stroke-width: 1.100;
    stroke-linecap: round;
}
.border-line {
    fill: none;
    stroke: #b9b9b4;
    stroke-width: .9;
}
.road {
    fill: none;
    stroke: #f5d172;
    stroke-width: 1.100;
    stroke-linejoin: round;
    filter: blur(.2px);
}
.road-major {
    fill: none;
    stroke: #f5d172;
    stroke-width: 1.900;
    stroke-linejoin: round;
    filter: blur(.2px);
}
.road-orange {
    fill: none;
    stroke: #f09018;
    stroke-width: 1.500;
}
.labels text {
    font-family: Roboto, "Liberation Sans", sans-serif;
    text-anchor: middle;
    fill: #444;
    stroke: #f2f0ec;
    stroke-width: 1.500px;
    paint-order: stroke;
    stroke-opacity: .6;
}
.labels .l-xs {
    font-size: 8.500px;
}
.labels .l-md {
    font-size: 10.500px;
}
.labels .l-dark {
    font-size: 10.500px;
    fill: #222;
}
.labels .l-bold {
    font-size: 11.500px;
    font-weight: 500;
    fill: #222;
}
.labels .l-end {
    font-size: 10px;
    text-anchor: end;
}
.dots circle {
    fill: #fff;
    stroke: #444;
    stroke-width: .6;
}
.shields text {
    font-family: Roboto, "Liberation Sans", sans-serif;
    font-size: 7.500px;
    text-anchor: middle;
    fill: #fff;
}
.shields .sh-small {
    font-size: 6.500px;
}
.sh-green rect {
    fill: #6c9f3c;
}
.sh-green .sh-teal {
    fill: #5f9d74;
}
.sh-blue rect {
    fill: #3a7bc8;
}
.pin {
    stroke: #fff;
    stroke-width: 1.500;
}
.pin-orange {
    fill: #f08000;
}
.pin-red {
    fill: #d40f0f;
}
.add-field {
    position: absolute;
    right: 30px;
    bottom: 30px;
    width: 360px;
    height: 60px;
    background-color: #f08000;
    color: #fff;
    font-size: 24px;
    line-height: 60px;
    text-align: center;
}

/* footer */
.footer {
    display: flex;
    align-items: center;
    height: 60px;
    padding: 0 0 2px 90px;
    border-top: 2px solid #5ca852;
    box-sizing: border-box;
}
.copyright {
    width: 719px;
    color: #000;
    font-size: 18px;
}
.socials {
    display: flex;
    gap: 31px;
}
.social {
    display: flex;
    justify-content: center;
    align-items: center;
    width: 41px;
    height: 41px;
    box-sizing: border-box;
    border: 1px solid #5ca852;
    border-radius: 50%;
}
```
